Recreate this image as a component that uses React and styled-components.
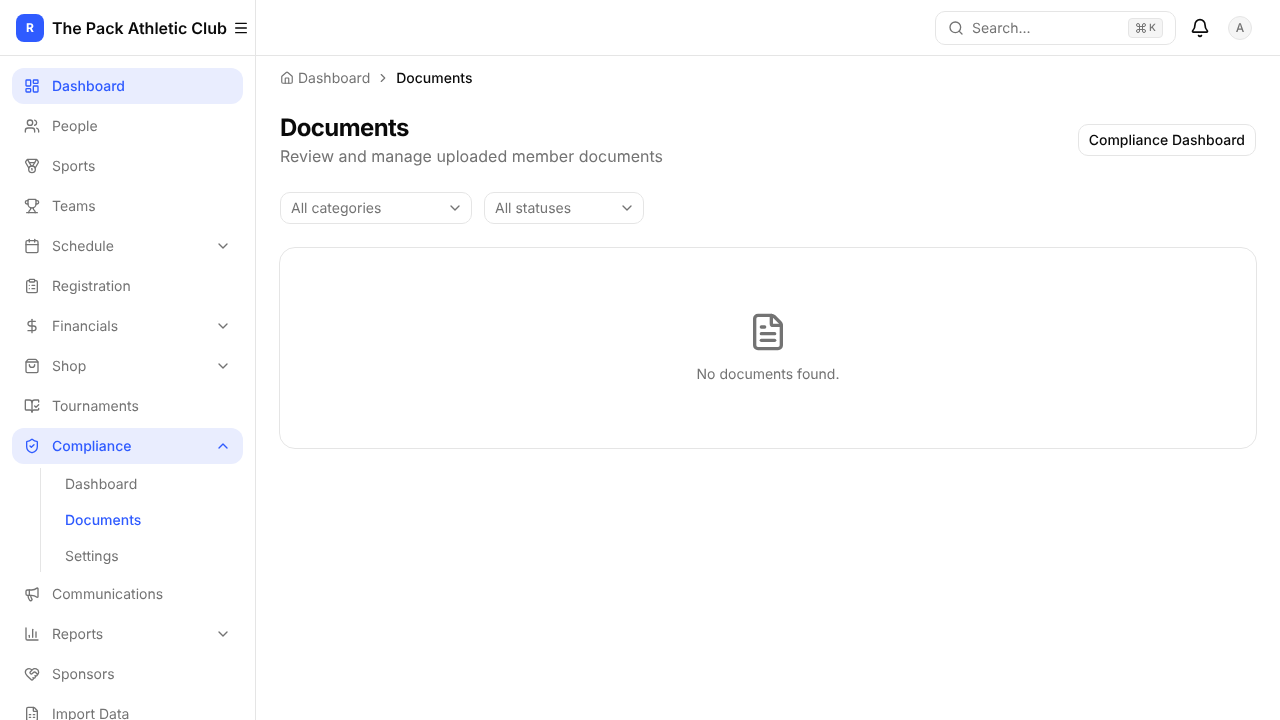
import React from "react";
import styled, { createGlobalStyle } from "styled-components";
import {
  LayoutDashboard,
  Users,
  Medal,
  Trophy,
  Calendar,
  ClipboardList,
  DollarSign,
  ShoppingBag,
  BookOpenCheck,
  ShieldCheck,
  Megaphone,
  ChartColumn,
  HeartHandshake,
  FileSpreadsheet,
  ChevronDown,
  ChevronUp,
  ChevronRight,
  Menu,
  Search,
  Command,
  Bell,
  House,
  FileText,
} from "lucide-react";

const GlobalStyle = createGlobalStyle`
  html, body {
    margin: 0;
    height: 100%;
    overflow: hidden;
    background: #fff;
    font-family: Inter, "Liberation Sans", sans-serif;
    color: #0a0a0a;
    text-rendering: geometricPrecision;
    -webkit-font-smoothing: antialiased;
  }
  * { box-sizing: border-box; }
`;

const Shell = styled.div`
  display: flex;
  width: 1280px;
  height: 720px;
  overflow: hidden;
  will-change: transform;
`;

const Sidebar = styled.aside`
  flex: 0 0 256px;
  height: 720px;
  border-right: 1px solid #e5e5e5;
  overflow: hidden;
`;

const Brand = styled.div`
  display: flex;
  align-items: center;
  height: 56px;
  padding: 0 6px 0 16px;
  border-bottom: 1px solid #e5e5e5;
`;

const LogoMark = styled.div`
  display: flex;
  align-items: center;
  justify-content: center;
  width: 28px;
  height: 28px;
  margin-right: 8px;
  border-radius: 8px;
  background: #2f5bff;
  color: #fff;
  font-size: 12px;
  font-weight: 700;
`;

const BrandName = styled.span`
  flex: 1;
  font-size: 16px;
  font-weight: 600;
  white-space: nowrap;
`;

const Nav = styled.nav`
  display: flex;
  flex-direction: column;
  gap: 4px;
  padding: 12px 12px 0;
`;

const NavItem = styled.div`
  display: flex;
  align-items: center;
  flex: 0 0 36px;
  height: 36px;
  padding: 0 12px;
  gap: 12px;
  border-radius: 12px;
  font-size: 14px;
  font-weight: ${(props) => (props.$active ? 500 : 400)};
  color: ${(props) => (props.$active ? "#2f5bff" : "#737373")};
  background: ${(props) => (props.$active ? "#e9edfe" : "transparent")};

  svg {
    flex: 0 0 16px;
  }
`;

const NavLabel = styled.span`
  flex: 1;
`;

const SubNav = styled.div`
  display: flex;
  flex-direction: column;
  gap: 4px;
  margin-left: 28px;
  padding-left: 12px;
  border-left: 1px solid #e5e5e5;
`;

const SubItem = styled.div`
  display: flex;
  align-items: center;
  height: 32px;
  padding: 0 12px;
  font-size: 14px;
  font-weight: ${(props) => (props.$active ? 500 : 400)};
  color: ${(props) => (props.$active ? "#2f5bff" : "#737373")};
`;

const Content = styled.div`
  flex: 1;
  min-width: 0;
`;

const Topbar = styled.header`
  display: flex;
  align-items: center;
  justify-content: flex-end;
  height: 56px;
  padding: 0 28px 0 0;
  border-bottom: 1px solid #e5e5e5;
`;

const SearchBox = styled.div`
  display: flex;
  align-items: center;
  width: 241px;
  height: 34px;
  padding: 0 12px;
  gap: 8px;
  border: 1px solid #e5e5e5;
  border-radius: 10px;
  color: #737373;
  font-size: 14px;
`;

const SearchText = styled.span`
  flex: 1;
  padding-top: 1px;
`;

const Kbd = styled.kbd`
  display: flex;
  align-items: center;
  justify-content: center;
  gap: 2px;
  width: 35px;
  height: 20px;
  border: 1px solid #e5e5e5;
  border-radius: 4px;
  background: #f5f5f5;
  color: #737373;
  font-family: inherit;
  font-size: 10px;
  font-weight: 500;
`;

const BellButton = styled.div`
  display: flex;
  margin: 0 18px 0 14px;
  color: #0a0a0a;
`;

const Avatar = styled.div`
  display: flex;
  align-items: center;
  justify-content: center;
  width: 24px;
  height: 24px;
  border: 1px solid #e5e5e5;
  border-radius: 50%;
  background: #f5f5f5;
  color: #737373;
  font-size: 12px;
  font-weight: 500;
`;

const Main = styled.main`
  padding: 12px 24px 0;
`;

const Crumbs = styled.div`
  display: flex;
  align-items: center;
  height: 20px;
  font-size: 14px;
  color: #737373;
`;

const CrumbHome = styled.span`
  display: flex;
  align-items: center;
  gap: 4px;
`;

const CrumbSep = styled.span`
  display: flex;
  margin: 0 6px;
`;

const CrumbCurrent = styled.span`
  color: #0a0a0a;
  font-weight: 500;
`;

const PageHead = styled.div`
  display: flex;
  align-items: center;
  justify-content: space-between;
  margin-top: 24px;
`;

const Title = styled.h1`
  margin: 0;
  font-size: 24px;
  line-height: 32px;
  font-weight: 700;
  letter-spacing: -0.6px;
`;

const Subtitle = styled.p`
  margin: 0;
  font-size: 16px;
  line-height: 24px;
  color: #737373;
`;

const OutlineButton = styled.button`
  height: 32px;
  padding: 0 10px;
  border: 1px solid #e5e5e5;
  border-radius: 10px;
  background: #fff;
  color: #0a0a0a;
  font-family: inherit;
  font-size: 14px;
  font-weight: 500;
  text-rendering: inherit;
`;

const Filters = styled.div`
  display: flex;
  gap: 12px;
  margin-top: 24px;
`;

const Select = styled.div`
  display: flex;
  align-items: center;
  justify-content: space-between;
  width: ${(props) => props.$width}px;
  height: 32px;
  padding: 0 8px 0 10px;
  border: 1px solid #e5e5e5;
  border-radius: 10px;
  color: #737373;
  font-size: 14px;
`;

const EmptyCard = styled.section`
  display: flex;
  flex-direction: column;
  align-items: center;
  height: 202px;
  margin: 23px -1px 0;
  padding-top: 64px;
  border: 1px solid #e5e5e5;
  border-radius: 16px;
  color: #737373;
  font-size: 14px;
`;

const EmptyText = styled.p`
  margin: 13px 0 0;
  line-height: 20px;
`;

const items = [
  { label: "Dashboard", icon: LayoutDashboard, active: true },
  { label: "People", icon: Users },
  { label: "Sports", icon: Medal },
  { label: "Teams", icon: Trophy },
  { label: "Schedule", icon: Calendar, chevron: true },
  { label: "Registration", icon: ClipboardList },
  { label: "Financials", icon: DollarSign, chevron: true },
  { label: "Shop", icon: ShoppingBag, chevron: true },
  { label: "Tournaments", icon: BookOpenCheck },
  { label: "Compliance", icon: ShieldCheck, active: true, open: true },
  { label: "Communications", icon: Megaphone },
  { label: "Reports", icon: ChartColumn, chevron: true },
  { label: "Sponsors", icon: HeartHandshake },
  { label: "Import Data", icon: FileSpreadsheet },
];

const App = () => {
  return (
    <Shell>
      <GlobalStyle />
      <Sidebar>
        <Brand>
          <LogoMark>R</LogoMark>
          <BrandName>The Pack Athletic Club</BrandName>
          <Menu size={16} />
        </Brand>
        <Nav>
          {items.map((item) => (
            <React.Fragment key={item.label}>
              <NavItem $active={item.active}>
                <item.icon size={16} />
                <NavLabel>{item.label}</NavLabel>
                {item.chevron && <ChevronDown size={16} />}
                {item.open && <ChevronUp size={16} />}
              </NavItem>
              {item.open && (
                <SubNav>
                  <SubItem>Dashboard</SubItem>
                  <SubItem $active>Documents</SubItem>
                  <SubItem>Settings</SubItem>
                </SubNav>
              )}
            </React.Fragment>
          ))}
        </Nav>
      </Sidebar>
      <Content>
        <Topbar>
          <SearchBox>
            <Search size={16} />
            <SearchText>Search...</SearchText>
            <Kbd>
              <Command size={12} />K
            </Kbd>
          </SearchBox>
          <BellButton>
            <Bell size={20} />
          </BellButton>
          <Avatar>A</Avatar>
        </Topbar>
        <Main>
          <Crumbs>
            <CrumbHome>
              <House size={14} />
              Dashboard
            </CrumbHome>
            <CrumbSep>
              <ChevronRight size={14} />
            </CrumbSep>
            <CrumbCurrent>Documents</CrumbCurrent>
          </Crumbs>
          <PageHead>
            <div>
              <Title>Documents</Title>
              <Subtitle>Review and manage uploaded member documents</Subtitle>
            </div>
            <OutlineButton>Compliance Dashboard</OutlineButton>
          </PageHead>
          <Filters>
            <Select $width={192}>
              All categories
              <ChevronDown size={16} />
            </Select>
            <Select $width={160}>
              All statuses
              <ChevronDown size={16} />
            </Select>
          </Filters>
          <EmptyCard>
            <FileText size={40} />
            <EmptyText>No documents found.</EmptyText>
          </EmptyCard>
        </Main>
      </Content>
    </Shell>
  );
};

export default App;
